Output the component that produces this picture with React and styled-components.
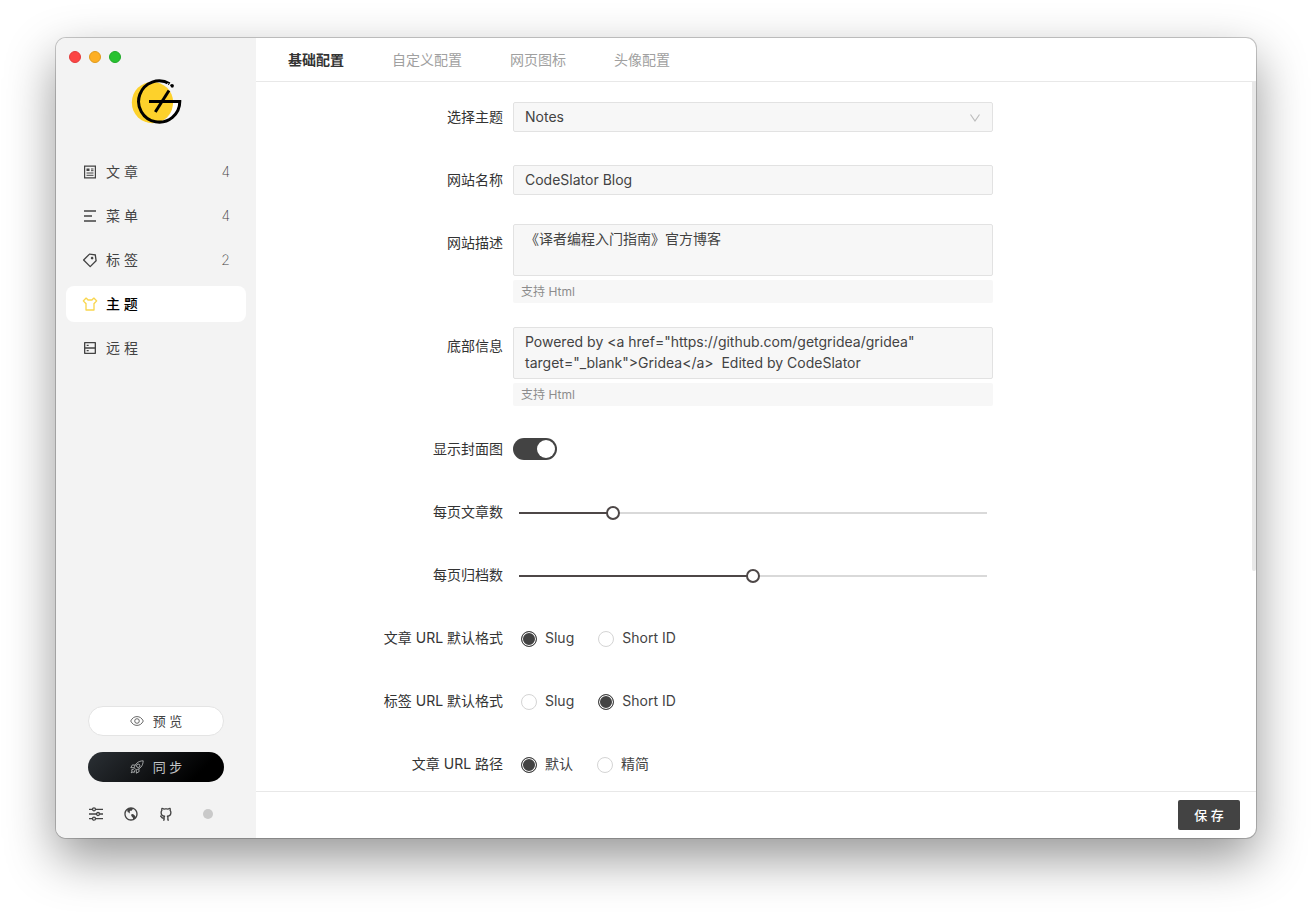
import React, { useState } from 'react';
import styled, { createGlobalStyle } from 'styled-components';
import { RiPriceTag3Line, RiTShirtLine, RiServerLine, RiEarthLine, RiGithubLine } from 'react-icons/ri';

const GlobalStyle = createGlobalStyle`
  *, *::before, *::after { box-sizing: border-box; }
  body { margin: 0; background: #fff; }
  body, button, input, select, textarea {
    font-family: Inter, "Noto Sans CJK SC", sans-serif;
    font-size: 14px;
    color: #434343;
  }
`;

const Desktop = styled.div`
  min-height: 100vh;
  padding: 38px 56px 74px;
  display: flex;
`;

const Window = styled.div`
  flex: 1;
  display: flex;
  border-radius: 10px;
  overflow: hidden;
  background: #fff;
  box-shadow: 0 0 0 1px rgba(0, 0, 0, 0.2), 0 20px 50px rgba(0, 0, 0, 0.42);
`;

const Sidebar = styled.aside`
  width: 200px;
  flex: none;
  background: #f3f3f3;
  display: flex;
  flex-direction: column;
`;

const TrafficLights = styled.div`
  display: flex;
  gap: 8px;
  padding: 13px 13px 0;
`;

const Light = styled.span`
  width: 12px;
  height: 12px;
  border-radius: 50%;
  background: ${(p) => p.$fill};
  border: 1px solid ${(p) => p.$edge};
`;

const LogoBox = styled.div`
  display: flex;
  justify-content: center;
  padding: 15px 0 28px;
  svg { display: block; }
`;

const Nav = styled.nav`
  display: flex;
  flex-direction: column;
  gap: 8px;
  padding: 0 10px;
`;

const NavItem = styled.a`
  display: flex;
  align-items: center;
  height: 36px;
  line-height: 36px;
  padding: 0 16px;
  border-radius: 8px;
  text-decoration: none;
  color: ${(p) => (p.$active ? '#000' : '#434343')};
  background: ${(p) => (p.$active ? '#fff' : 'transparent')};
  font-weight: ${(p) => (p.$active ? 500 : 400)};
  svg {
    width: 16px;
    height: 16px;
    margin-right: 8px;
    color: ${(p) => (p.$active ? '#f9d64f' : '#434343')};
  }
`;

const Count = styled.span`
  margin-left: auto;
  font-weight: 200;
`;

const SideFooter = styled.div`
  margin-top: auto;
  padding: 0 32px 16px;
  display: flex;
  flex-direction: column;
  gap: 16px;
`;

const PillButton = styled.button`
  height: 30px;
  line-height: 28px;
  border-radius: 15px;
  display: flex;
  align-items: center;
  justify-content: center;
  gap: 9px;
  padding: 0;
  font-size: 13px;
  border: ${(p) => (p.$dark ? '0' : '1px solid #e4e4e4')};
  background: ${(p) => (p.$dark ? 'linear-gradient(135deg, #2b3035, #000 80%)' : '#fff')};
  color: ${(p) => (p.$dark ? '#c4c6c8' : '#434343')};
`;

const Tools = styled.div`
  display: flex;
  align-items: center;
  gap: 19px;
  padding-top: 8px;
`;

const ToolButton = styled.button`
  width: 16px;
  height: 16px;
  padding: 0;
  border: 0;
  background: none;
  svg { display: block; width: 16px; height: 16px; }
`;

const StatusDot = styled.span`
  width: 10px;
  height: 10px;
  margin: 0 11px 0 auto;
  border-radius: 50%;
  background: #c9c9c9;
`;

const Main = styled.main`
  flex: 1;
  min-width: 0;
  display: flex;
  flex-direction: column;
`;

const Tabs = styled.div`
  display: flex;
  gap: 48px;
  height: 44px;
  padding: 0 32px;
  border-bottom: 1px solid #e8e8e8;
`;

const Tab = styled.button`
  padding: 0;
  border: 0;
  background: none;
  line-height: 43px;
  color: ${(p) => (p.$active ? '#333' : '#a0a0a0')};
  font-weight: ${(p) => (p.$active ? 700 : 400)};
`;

const Scroller = styled.div`
  position: relative;
  flex: 1;
`;

const ScrollThumb = styled.span`
  position: absolute;
  top: 0;
  right: 0;
  width: 4px;
  height: 69%;
  background: #e8e8e8;
  border-radius: 0 0 2px 2px;
`;

const Form = styled.form`
  display: flex;
  flex-direction: column;
  gap: 23px;
  padding: 15px 23px 7px 17px;
`;

const Row = styled.div`
  display: grid;
  grid-template-columns: 6fr 12fr 6fr;
`;

const Label = styled.label`
  padding-right: 10px;
  line-height: 40px;
  text-align: right;
  white-space: nowrap;
  color: #333;
`;

const Control = styled.div`
  position: relative;
  min-height: 40px;
  display: flex;
  flex-direction: column;
  justify-content: center;
  align-items: stretch;
`;

const field = `
  width: 100%;
  border: 1px solid #e2e2e2;
  border-radius: 2px;
  background: #f7f7f7;
  outline: none;
`;

const TextInput = styled.input`
  ${field}
  height: 30px;
  padding: 0 11px 2px;
`;

const Select = styled.select`
  ${field}
  height: 30px;
  padding: 0 11px 2px;
  appearance: none;
`;

const Chevron = styled.svg`
  position: absolute;
  right: 12px;
  top: 16px;
  pointer-events: none;
`;

const TextArea = styled.textarea`
  ${field}
  display: block;
  height: 52px;
  margin-top: 1px;
  padding: 3px 11px;
  line-height: 21px;
  resize: none;
  overflow: hidden;
`;

const Hint = styled.div`
  margin-top: 4px;
  padding: 0 8px;
  line-height: 23px;
  font-size: 12px;
  color: #8c8c8c;
  background: #f7f7f7;
  border-radius: 2px;
`;

const Switch = styled.input`
  appearance: none;
  width: 44px;
  height: 22px;
  margin: 0;
  border-radius: 11px;
  background: ${(p) => (p.checked ? '#434343' : '#bfbfbf')};
  display: flex;
  justify-content: ${(p) => (p.checked ? 'flex-end' : 'flex-start')};
  align-items: center;
  padding: 0 2px;
  &::before {
    content: '';
    width: 18px;
    height: 18px;
    border-radius: 50%;
    background: #fff;
  }
`;

const Slider = styled.input`
  appearance: none;
  width: 100%;
  height: 14px;
  margin: 2px 0 0;
  background:
    linear-gradient(#4d4747, #4d4747) 6px 6px / calc((100% - 12px) * ${(p) => p.value / p.max}) 2px no-repeat,
    linear-gradient(#d9d9d9, #d9d9d9) 6px 6px / calc(100% - 12px) 2px no-repeat;
  &::-webkit-slider-thumb {
    appearance: none;
    width: 14px;
    height: 14px;
    border-radius: 50%;
    border: 2px solid #4d4747;
    background: #fff;
  }
`;

const RadioGroup = styled.div`
  display: flex;
  gap: 24px;
  padding-left: 8px;
`;

const RadioLabel = styled.label`
  display: flex;
  align-items: center;
  gap: 8px;
  line-height: 40px;
`;

const Radio = styled.input`
  appearance: none;
  width: 16px;
  height: 16px;
  margin: 2px 0 0;
  border-radius: 50%;
  border: 1px solid ${(p) => (p.checked ? '#434343' : '#d4d4d4')};
  background: ${(p) => (p.checked ? '#434343' : '#fff')};
  box-shadow: inset 0 0 0 1px #fff;
`;

const ActionBar = styled.footer`
  display: flex;
  justify-content: flex-end;
  padding: 8px 16px;
  border-top: 1px solid #e8e8e8;
`;

const SaveButton = styled.button`
  width: 62px;
  height: 30px;
  line-height: 30px;
  padding: 0;
  border: 0;
  border-radius: 2px;
  background: #434343;
  color: #fff;
  font-size: 13px;
  font-weight: 500;
`;

const Logo = () => (
  <svg width="52" height="48" viewBox="-2 -1 52 48" fill="none">
    <circle cx="20.5" cy="23.5" r="20.7" fill="#fdd12b" />
    <path d="M46 24A19 19 0 0 1 32 42C38 38 41 31 41 24Z" fill="#fff" />
    <path d="M37.6 4.7A20.6 20.6 0 1 0 47.8 22.5H17" stroke="#000" strokeWidth="3" />
    <path d="M37 11.500 23.300 33" stroke="#000" strokeWidth="3" />
    <path d="M36.200 4 34.900 6.600" stroke="#f3f3f3" strokeWidth="1" />
    <circle cx="40" cy="6.800" r="1.900" fill="#000" />
    <path d="M36.300 7.500l2.200.2.800 2.600" stroke="#fff" strokeWidth="1" />
  </svg>
);

const ArticleIcon = () => (
  <svg viewBox="0 0 16 16" fill="none" stroke="currentColor">
    <path d="M2.6 2.1h10.8v11.8H2.6z" strokeWidth="1.2" />
    <path d="M4.5 4.5h3v2.5h-3z" fill="currentColor" stroke="none" />
    <path d="M9 5h2.5M9 6.7h2.5M4.5 9h7M4.5 11.3h7" />
  </svg>
);

const MenuIcon = () => (
  <svg viewBox="0 0 16 16" fill="none" stroke="currentColor" strokeWidth="1.4">
    <path d="M2 3h12M2 8h8M2 13h12" />
  </svg>
);

const EyeIcon = () => (
  <svg width="14" height="14" viewBox="0 0 14 14" fill="none" stroke="currentColor" strokeWidth="0.8">
    <path d="M.7 7C2.200 4 4.300 2.600 7 2.600S11.800 4 13.300 7C11.800 10 9.700 11.400 7 11.400S2.200 10 .7 7Z" />
    <circle cx="7" cy="7" r="2.300" />
  </svg>
);

const RocketIcon = () => (
  <svg width="14" height="14" viewBox="0 0 14 14" fill="none" stroke="currentColor" strokeWidth="0.8" strokeLinejoin="round">
    <path d="M4.200 7.800C5.200 3.800 8 1 13.200.8 13 6 10.200 8.800 6.200 9.800Z" />
    <circle cx="8.200" cy="5.800" r="1.700" />
    <path d="M5 5.200 2.400 4.900.8 7.600l3.400.2M8.800 9l.3 2.600-2.700 1.600-.2-3.400M3.800 9.200 1.500 9.800l.6 1.200-.9 1.800 1.800-.9 1.200.6.600-2.300" />
  </svg>
);

const SlidersIcon = () => (
  <svg viewBox="0 0 16 16" fill="none" stroke="currentColor" strokeWidth="1.300">
    <path d="M1 3.300h3.500M7.500 3.300H15M1 8h7.500M11.500 8H15M1 12.700h3.500M7.500 12.700H15" />
    <circle cx="6" cy="3.300" r="1.500" />
    <circle cx="10" cy="8" r="1.500" />
    <circle cx="6" cy="12.700" r="1.500" />
  </svg>
);

const navItems = [
  { label: '文 章', icon: ArticleIcon, count: 4 },
  { label: '菜 单', icon: MenuIcon, count: 4 },
  { label: '标 签', icon: RiPriceTag3Line, count: 2 },
  { label: '主 题', icon: RiTShirtLine, active: true },
  { label: '远 程', icon: RiServerLine },
];

const tabs = ['基础配置', '自定义配置', '网页图标', '头像配置'];

function RadioRow({ name, label, options, initial }) {
  const [value, setValue] = useState(initial);
  return (
    <Row role="radiogroup" aria-labelledby={`${name}-label`}>
      <Label as="span" id={`${name}-label`}>{label}</Label>
      <Control>
        <RadioGroup>
          {options.map((o) => (
            <RadioLabel key={o}>
              <Radio type="radio" name={name} checked={value === o} onChange={() => setValue(o)} />
              {o}
            </RadioLabel>
          ))}
        </RadioGroup>
      </Control>
    </Row>
  );
}

function SliderRow({ id, label, max, initial }) {
  const [value, setValue] = useState(initial);
  return (
    <Row>
      <Label htmlFor={id}>{label}</Label>
      <Control>
        <Slider id={id} type="range" min={0} max={max} value={value} onChange={(e) => setValue(Number(e.target.value))} />
      </Control>
    </Row>
  );
}

function TextAreaRow({ id, label, text }) {
  return (
    <Row>
      <Label htmlFor={id}>{label}</Label>
      <Control>
        <TextArea id={id} defaultValue={text} spellCheck={false} />
        <Hint>支持 Html</Hint>
      </Control>
    </Row>
  );
}

export default function App() {
  const [tab, setTab] = useState(0);
  const [cover, setCover] = useState(true);
  return (
    <>
      <GlobalStyle />
      <Desktop>
        <Window>
          <Sidebar>
            <TrafficLights>
              <Light $fill="#fc4645" $edge="#e33b3b" />
              <Light $fill="#fdaf24" $edge="#df9a1c" />
              <Light $fill="#28c231" $edge="#1fa928" />
            </TrafficLights>
            <LogoBox><Logo /></LogoBox>
            <Nav>
              {navItems.map(({ label, icon: Icon, count, active }) => (
                <NavItem key={label} href="#" $active={active}>
                  <Icon />
                  {label}
                  {count && <Count>{count}</Count>}
                </NavItem>
              ))}
            </Nav>
            <SideFooter>
              <PillButton type="button"><EyeIcon />预 览</PillButton>
              <PillButton type="button" $dark><RocketIcon />同 步</PillButton>
              <Tools>
                <ToolButton type="button" aria-label="设置"><SlidersIcon /></ToolButton>
                <ToolButton type="button" aria-label="访问网站"><RiEarthLine /></ToolButton>
                <ToolButton type="button" aria-label="GitHub"><RiGithubLine /></ToolButton>
                <StatusDot />
              </Tools>
            </SideFooter>
          </Sidebar>
          <Main>
            <Tabs>
              {tabs.map((t, i) => (
                <Tab key={t} type="button" $active={i === tab} onClick={() => setTab(i)}>{t}</Tab>
              ))}
            </Tabs>
            <Scroller>
              <Form id="theme-form" onSubmit={(e) => e.preventDefault()}>
                <Row>
                  <Label htmlFor="theme">选择主题</Label>
                  <Control>
                    <Select id="theme" defaultValue="Notes"><option>Notes</option></Select>
                    <Chevron width="12" height="10" viewBox="0 0 12 10" fill="none" stroke="#bdbdbd" strokeWidth="1.200">
                      <path d="M1.500 1.500 6 8l4.500-6.500" />
                    </Chevron>
                  </Control>
                </Row>
                <Row>
                  <Label htmlFor="site-name">网站名称</Label>
                  <Control><TextInput id="site-name" defaultValue="CodeSlator Blog" /></Control>
                </Row>
                <TextAreaRow id="site-desc" label="网站描述" text="《译者编程入门指南》官方博客" />
                <TextAreaRow
                  id="site-footer"
                  label="底部信息"
                  text={'Powered by <a href="https://github.com/getgridea/gridea" target="_blank">Gridea</a>  Edited by CodeSlator'}
                />
                <Row>
                  <Label htmlFor="cover">显示封面图</Label>
                  <Control>
                    <Switch id="cover" type="checkbox" checked={cover} onChange={() => setCover(!cover)} />
                  </Control>
                </Row>
                <SliderRow id="posts-per-page" label="每页文章数" max={50} initial={10} />
                <SliderRow id="archives-per-page" label="每页归档数" max={100} initial={50} />
                <RadioRow name="post-url" label="文章 URL 默认格式" options={['Slug', 'Short ID']} initial="Slug" />
                <RadioRow name="tag-url" label="标签 URL 默认格式" options={['Slug', 'Short ID']} initial="Short ID" />
                <RadioRow name="post-path" label="文章 URL 路径" options={['默认', '精简']} initial="默认" />
              </Form>
              <ScrollThumb />
            </Scroller>
            <ActionBar>
              <SaveButton type="submit" form="theme-form">保 存</SaveButton>
            </ActionBar>
          </Main>
        </Window>
      </Desktop>
    </>
  );
}
